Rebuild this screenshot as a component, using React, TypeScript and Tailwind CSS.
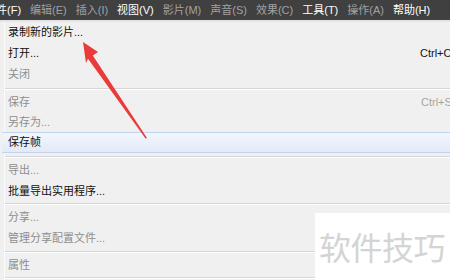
import React from "react";

const font = { fontFamily: '"Liberation Sans", "Noto Sans CJK SC", sans-serif' };
const cjk = { fontFamily: '"Noto Sans CJK SC", "Noto Sans", sans-serif' };

type Item =
  | { kind: "item"; label: string; h: number; disabled?: boolean; shortcut?: string; hl?: boolean }
  | { kind: "sep"; h: number };

const items: Item[] = [
  { kind: "item", label: "录制新的影片...", h: 21 },
  { kind: "item", label: "打开...", h: 21, shortcut: "Ctrl+O" },
  { kind: "item", label: "关闭", h: 21, disabled: true },
  { kind: "sep", h: 7 },
  { kind: "item", label: "保存", h: 20, disabled: true, shortcut: "Ctrl+S" },
  { kind: "item", label: "另存为...", h: 20, disabled: true },
  { kind: "item", label: "保存帧", h: 21, hl: true },
  { kind: "sep", h: 7 },
  { kind: "item", label: "导出...", h: 21, disabled: true },
  { kind: "item", label: "批量导出实用程序...", h: 20 },
  { kind: "sep", h: 6 },
  { kind: "item", label: "分享...", h: 21, disabled: true },
  { kind: "item", label: "管理分享配置文件...", h: 21, disabled: true },
  { kind: "sep", h: 6 },
  { kind: "item", label: "属性", h: 20, disabled: true },
  { kind: "sep", h: 6 },
];

const bar = [
  { t: "文件(F)", on: true },
  { t: "编辑(E)", on: false },
  { t: "插入(I)", on: false },
  { t: "视图(V)", on: true },
  { t: "影片(M)", on: false },
  { t: "声音(S)", on: false },
  { t: "效果(C)", on: false },
  { t: "工具(T)", on: true },
  { t: "操作(A)", on: false },
  { t: "帮助(H)", on: true },
];

export default function App() {
  return (
    <div className="relative w-[450px] h-[280px] overflow-hidden bg-[#f0f0f0]" style={font}>
      <div className="h-[20px] bg-[#404040] flex items-center gap-[9px] ml-[-15px] text-[11px] whitespace-nowrap">
        {bar.map((b) => (
          <span key={b.t} className={b.on ? "text-white" : "text-[#a2a2a2]"}>
            {b.t}
          </span>
        ))}
      </div>
      <div className="h-[2px] bg-[#e4e4e4]" />
      <div className="flex flex-col border-l border-[#fbfbfb] ml-[4px]">
        {items.map((it, i) =>
          it.kind === "sep" ? (
            <div key={i} className="flex flex-col justify-center" style={{ height: it.h }}>
              <div className="h-px bg-[#d6d6d6]" />
              <div className="h-px bg-white" />
            </div>
          ) : (
            <div
              key={i}
              className={
                "flex items-center justify-between pl-[3px] text-[11px] whitespace-nowrap " +
                (it.hl
                  ? "bg-gradient-to-b from-[#f2f6fc] to-[#e3eaf6] border-y border-[#c3d2ee] -ml-[3px] pl-[6px]"
                  : "")
              }
              style={{ height: it.h }}
            >
              <span className={it.disabled ? "text-[#8e8e8e]" : "text-[#111]"}>{it.label}</span>
              {it.shortcut && (
                <span
                  className={
                    "overflow-hidden " +
                    (it.disabled ? "text-[#a5a5a5] w-[29px]" : "text-[#111] w-[30px]")
                  }
                >
                  {it.shortcut}
                </span>
              )}
            </div>
          )
        )}
      </div>
      <div className="absolute left-[315px] top-[213px] w-[135px] h-[67px] bg-white flex items-start pt-[15px] pl-[4px]">
        <span className="text-[32px] leading-[36px] text-[#d4d4d4] whitespace-nowrap tracking-[-0.5px]" style={cjk}>
          软件技巧
        </span>
      </div>
      <svg className="absolute left-0 top-0" width="450" height="280" viewBox="0 0 450 280">
        <polygon
          points="83,42 98,52 92.8,55.5 147,138 145.5,138.5 88,58.8 86,63"
          fill="#ea3b3b"
        />
      </svg>
    </div>
  );
}
